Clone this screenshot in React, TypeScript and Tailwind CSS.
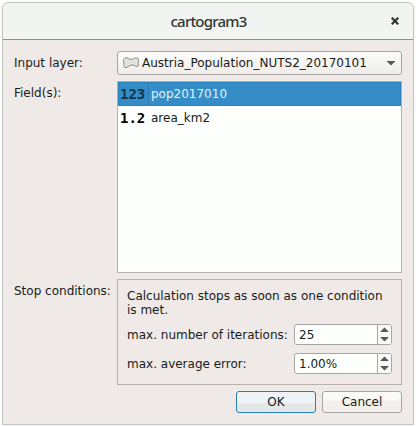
import React from "react";

function SpinBox({ value }: { value: string }) {
  return (
    <div className="flex h-[21px] w-[98px] overflow-hidden rounded-[3px] border border-[#aaa5a5] bg-[#fdfffc]">
      <span className="flex-1 pl-[4px] leading-[20px]">{value}</span>
      <div className="flex w-[14px] items-center justify-center border-l border-[#aaa5a5] bg-[#f9f9f7]">
        <svg width="9" height="15" viewBox="0 0 9 15" fill="#555957">
          <path d="M4.500 .5L8.500 4.500V5H.5V4.500zM.5 10h8v.5L4.500 14.500L.5 10.500z" />
        </svg>
      </div>
    </div>
  );
}

export default function App() {
  return (
    <div className="h-[427px] w-[416px] bg-white pt-[2px] pl-[2px] font-['DejaVu_Sans',sans-serif] text-[12px] text-[#171b19]">
      <div className="flex h-[423px] w-[412px] flex-col overflow-hidden rounded-t-[7px] border border-[#c2c7c3] bg-[#efeae7] shadow-[0_0_2px_#0002]">
        <header className="flex h-[37px] shrink-0 items-center border-b border-[#8b908d] bg-[#f1f4f1] pl-[22px]">
          <h1 className="flex-1 pl-[1px] text-center font-['Noto_Sans',sans-serif] text-[15px] leading-[34px] font-medium tracking-[-0.8px] text-[#303633]">cartogram3</h1>
          <svg className="mr-[14px]" width="8" height="8" viewBox="0 0 8 8" stroke="#303633" strokeWidth="2.2">
            <path d="M.7 .7l6.600 6.600M7.300 .7L.7 7.300" />
          </svg>
        </header>
        <main className="flex flex-1 flex-col pt-[11px] pl-[11px]">
          <div className="flex h-[24px]">
            <label className="w-[103px] shrink-0 leading-[24px]">Input layer:</label>
            <div className="flex w-[285px] items-center rounded-[3px] border border-[#aaa5a5] bg-linear-to-b from-[#fcfcfa] to-[#f0edeb] pl-[4px]">
              <svg width="18" height="14" viewBox="0 0 18 14" fill="#dfe3df" stroke="#858a86">
                <path d="M2.500 2.500C4 1 6 2 7.500 3C9.500 4.300 11 2.500 13.500 2C16 1.700 17 3 16.500 5C15.500 7 17 8.500 16 10C14.500 11.500 12.500 9 10 9C7.500 9 5.500 12.500 3 11.500C1 10.500 2.500 9 2 7C1.500 5.500 1 4 2.500 2.500Z" />
              </svg>
              <span className="ml-[2px] flex-1 leading-[22px]">Austria_Population_NUTS2_20170101</span>
              <svg className="mr-[6px]" width="8" height="5" viewBox="0 0 8 5" fill="#555957">
                <path d="M0 0h8v.5L4 4.500L0 .5z" />
              </svg>
            </div>
          </div>
          <div className="mt-[6px] flex h-[192px]">
            <label className="w-[103px] shrink-0 leading-[24px]">Field(s):</label>
            <div className="w-[285px] border border-[#b7b2b0] bg-[#fdfffc]">
              <div className="flex h-[24px] border border-[#2980b9] bg-[#348dc7] text-[#e4f1f8]">
                <b className="w-[30px] border-r border-[#2980b9] pl-[1px] font-['DejaVu_Sans_Mono',monospace] text-[14px] leading-[22px] text-[#12374e]">123</b>
                <span className="pl-[2px] leading-[23px]">pop2017010</span>
              </div>
              <div className="flex h-[24px] pl-[2px] leading-[24px]">
                <b className="w-[31px] font-['DejaVu_Sans_Mono',monospace] text-[14px] text-black">1.2</b>
                <span>area_km2</span>
              </div>
            </div>
          </div>
          <div className="mt-[6px] flex h-[106px]">
            <label className="w-[103px] shrink-0 leading-[24px]">Stop conditions:</label>
            <section className="w-[285px] border border-[#b7b2b0] pt-[9px] pl-[9px]">
              <p className="leading-[14px]">Calculation stops as soon as one condition<br />is met.</p>
              <div className="mt-[7px] flex h-[21px]">
                <label className="w-[167px] leading-[22px] whitespace-nowrap">max. number of iterations:</label>
                <SpinBox value="25" />
              </div>
              <div className="mt-[8px] flex h-[21px]">
                <label className="w-[167px] leading-[22px]">max. average error:</label>
                <SpinBox value="1.00%" />
              </div>
            </section>
          </div>
          <footer className="mt-[6px] flex gap-[6px] pl-[222px]">
            <button className="h-[22px] w-[80px] rounded-[3px] border border-[#2980b9] bg-linear-to-b from-[#edf3f7] from-50% to-[#e3e7e6] to-60% leading-[20px]">OK</button>
            <button className="h-[22px] w-[80px] rounded-[3px] border border-[#aaa5a5] bg-linear-to-b from-[#fafaf8] from-35% to-[#f2efed] to-55% leading-[20px]">Cancel</button>
          </footer>
        </main>
      </div>
    </div>
  );
}
